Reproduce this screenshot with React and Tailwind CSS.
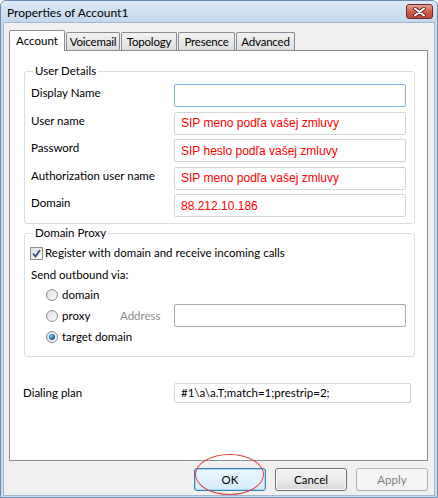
import React from 'react';

const ui = "font-['Lato','Noto_Sans',sans-serif] text-[11px] leading-[16px] text-black";

function Field({ label, value, focused }) {
  return (
    <div className="flex items-start h-[23px]">
      <div className="w-[143px] pt-[1px] text-[11.5px]">{label}</div>
      <div
        className={`w-[232px] h-[23px] bg-white border rounded-[2px] flex items-center pl-[6px] font-['Liberation_Sans',Arial,sans-serif] text-[12px] text-[#ff0000] ${
          focused ? 'border-[#7eb4ea]' : 'border-[#d5d5d5]'
        }`}
      >
        {value}
      </div>
    </div>
  );
}

function Radio({ checked }) {
  return (
    <span className="w-[12px] h-[12px] rounded-full border border-[#8e8f8f] bg-gradient-to-br from-[#dcdcdc] to-[#fbfbfb] flex items-center justify-center">
      {checked && (
        <span className="w-[6px] h-[6px] rounded-full bg-[radial-gradient(circle_at_35%_35%,#7ed0f5,#1a6ea8_55%,#0d3d63)]" />
      )}
    </span>
  );
}

function Tab({ label, active, w }) {
  if (active) {
    return (
      <div className="h-[21px] w-[56px] bg-white border border-[#898c95] border-b-0 rounded-t-[2px] flex items-start justify-center pt-[2px] -mb-[1px] relative z-10 text-[11.5px]">
        {label}
      </div>
    );
  }
  return (
    <div className={`h-[18px] ${w} bg-gradient-to-b from-[#f2f2f2] to-[#dedede] border border-[#898c95] border-b-0 rounded-t-[2px] flex items-center justify-center text-[11.5px] tracking-[-0.2px]`}>
      {label}
    </div>
  );
}

function Button({ children, primary, disabled }) {
  return (
    <div
      className={`w-[72px] h-[23px] rounded-[3px] border flex items-center justify-center text-[11.5px] ${
        primary
          ? 'border-[#3c7fb1] bg-gradient-to-b from-[#eaf6fd] to-[#d6ecfa] shadow-[inset_0_0_0_1px_#a6dcf7]'
          : disabled
          ? 'border-[#adb2b5] bg-[#f4f4f4] text-[#838383]'
          : 'border-[#707070] bg-gradient-to-b from-[#f2f2f2] via-[#ebebeb] to-[#d6d6d6] shadow-[inset_0_0_0_1px_#fcfcfc]'
      }`}
    >
      {children}
    </div>
  );
}

export default function App() {
  return (
    <div className={`w-[438px] h-[498px] flex flex-col bg-[#c9dcf1] border border-[#6d8db5] rounded-t-[6px] overflow-hidden ${ui}`}>
      {/* title bar */}
      <div className="h-[21px] flex items-center justify-between pl-[6px] pr-[4px] bg-gradient-to-b from-[#dde9f6] to-[#c4d8ee]">
        <span className="text-[12px] pt-[2px]">Properties of Account1</span>
        <div className="w-[27px] h-[15px] mt-[3px] self-start rounded-[3px] border border-[#6a2a2a] bg-gradient-to-b from-[#e8a493] via-[#d0604c] to-[#c24634] flex items-center justify-center">
          <svg width="13" height="10" viewBox="0 0 13 10">
            <path d="M2 1.5 L11 8.5 M11 1.5 L2 8.5" stroke="#5a2020" strokeWidth="3.6" strokeLinecap="round" />
            <path d="M2 1.5 L11 8.5 M11 1.5 L2 8.5" stroke="#ffffff" strokeWidth="2" strokeLinecap="round" />
          </svg>
        </div>
      </div>

      {/* client area */}
      <div className="flex-1 mx-[2px] mb-[1px] bg-[#f0f0f0] border border-[#a5b6cb] px-[5px] pt-[6px] flex flex-col">
        <div className="flex items-end h-[21px]">
          <Tab label="Account" active />
          <div className="flex items-end gap-[1px] ml-[1px]">
            <Tab label="Voicemail" w="w-[54px]" />
            <Tab label="Topology" w="w-[56px]" />
            <Tab label="Presence" w="w-[57px]" />
            <Tab label="Advanced" w="w-[59px]" />
          </div>
        </div>

        <div className="w-[419px] h-[411px] bg-white border border-[#898c95] px-[14px] pt-[12px] flex flex-col">
          <fieldset className="border border-[#d5dfe5] rounded-[3px] px-[6px] pb-[6px] pr-[8px]">
            <legend className="ml-[2px] px-[2px] text-[11.5px]">User Details</legend>
            <div className="flex flex-col gap-[4.5px] pt-[5px]">
              <Field label="Display Name" value="" focused />
              <Field label="User name" value="SIP meno podľa vašej zmluvy" />
              <Field label="Password" value="SIP heslo podľa vašej zmluvy" />
              <Field label="Authorization user name" value="SIP meno podľa vašej zmluvy" />
              <Field label="Domain" value="88.212.10.186" />
            </div>
          </fieldset>

          <fieldset className="mt-[1px] border border-[#d5dfe5] rounded-[3px] px-[6px] pb-[9px] pr-[8px]">
            <legend className="ml-[2px] px-[2px] text-[11.5px]">Domain Proxy</legend>
            <div className="flex items-center gap-[2px] mt-[4px] -ml-[1px] text-[11.5px]">
              <span className="w-[13px] h-[13px] border border-[#8e8f8f] bg-gradient-to-br from-[#e0e0e0] to-[#fafafa] flex items-center justify-center">
                <svg width="9" height="9" viewBox="0 0 9 9">
                  <path d="M1 4.5 L3.5 7.5 L8 1" fill="none" stroke="#3a4f85" strokeWidth="1.8" />
                </svg>
              </span>
              <span>Register with domain and receive incoming calls</span>
            </div>
            <div className="mt-[6px] text-[11.5px]">Send outbound via:</div>
            <div className="flex flex-col pl-[15px] mt-[1px] text-[11.5px]">
              <div className="flex items-center h-[21px] gap-[4px]">
                <Radio />
                <span>domain</span>
              </div>
              <div className="flex items-center h-[21px]">
                <div className="flex items-center gap-[4px] w-[74px]">
                  <Radio />
                  <span>proxy</span>
                </div>
                <span className="w-[54px] text-[#8d8d8d]">Address</span>
                <div className="w-[232px] h-[23px] bg-white border border-[#ababab] rounded-[2px]" />
              </div>
              <div className="flex items-center h-[21px] gap-[4px]">
                <Radio checked />
                <span>target domain</span>
              </div>
            </div>
          </fieldset>

          <div className="flex items-center mt-[26px] -ml-[1px] text-[11.5px]">
            <span className="w-[151px]">Dialing plan</span>
            <div className="w-[237px] h-[20px] bg-white border border-[#d5d5d5] rounded-[2px] flex items-center pl-[6px]">
              #1\a\a.T;match=1;prestrip=2;
            </div>
          </div>
        </div>

        <div className="flex justify-end gap-[9px] mt-[7px] w-[419px]">
          <div className="relative">
            <Button primary>OK</Button>
            <div className="absolute left-[1px] right-[2px] -top-[14px] -bottom-[4px] rounded-[50%] border border-[#e03a3a]" />
          </div>
          <Button>Cancel</Button>
          <Button disabled>Apply</Button>
        </div>
      </div>
    </div>
  );
}
